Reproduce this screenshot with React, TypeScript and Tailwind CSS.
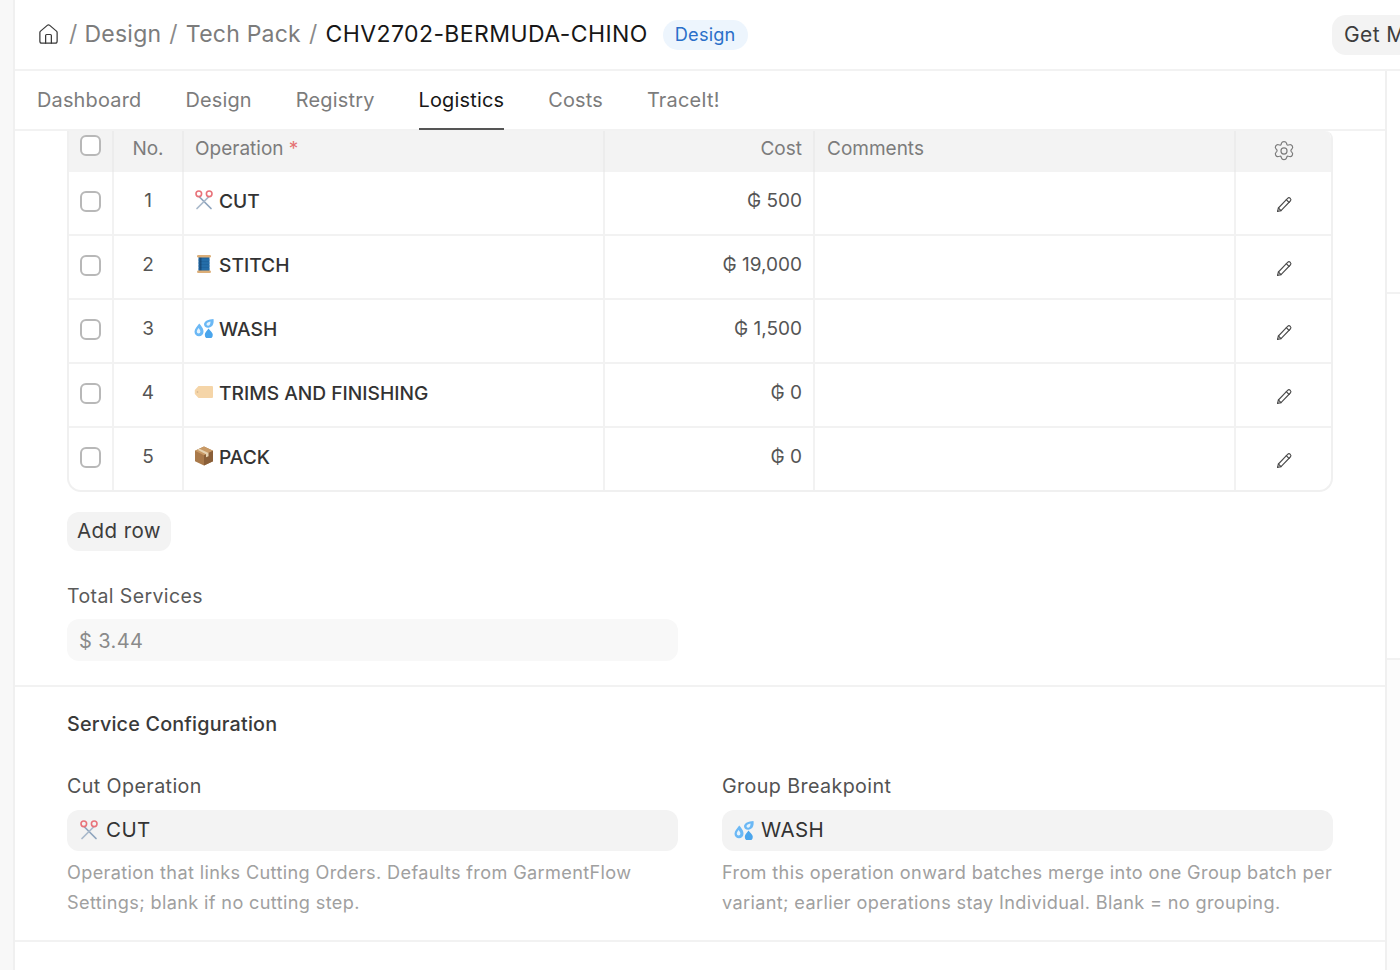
import React from "react";
import { House } from "lucide-react";

const Scissors = ({ s = 20 }: { s?: number }) => (
  <svg width={s} height={s} viewBox="0 0 20 20" fill="none" className="shrink-0">
    <path d="M5.500 7 17 18.500" stroke="#8ea4bd" strokeWidth="1.7" strokeLinecap="round" />
    <path d="M14.500 7 3 18.500" stroke="#a9b9cb" strokeWidth="1.7" strokeLinecap="round" />
    <circle cx="4.800" cy="3.800" r="2.800" stroke="#e8737a" strokeWidth="1.6" />
    <circle cx="15.200" cy="3.800" r="2.800" stroke="#e8737a" strokeWidth="1.6" />
  </svg>
);
const Spool = () => (
  <svg width="20" height="20" viewBox="0 0 20 20" className="shrink-0">
    <rect x="4.500" y="3" width="11" height="14" fill="#1f659f" />
    <path d="M4.500 6h11M4.500 9h11M4.500 12h11M4.500 15h11" stroke="#2b76b3" strokeWidth="1" />
    <rect x="5.500" y="3" width="2" height="14" fill="#123a63" opacity=".6" />
    <rect x="3" y="1" width="14" height="2.600" rx="1.300" fill="#dcae78" />
    <rect x="3" y="16.400" width="14" height="2.600" rx="1.300" fill="#dcae78" />
  </svg>
);
const Drops = ({ s = 20 }: { s?: number }) => (
  <svg width={s} height={s} viewBox="0 0 20 20" className="shrink-0">
    <path d="M5.200 5.500c-2.200 3-4.700 5.300-4.700 8.300a4.500 4.500 0 0 0 9 0c0-1.500-.3-2.900-1.300-4.400C7.300 8 6.200 6.700 5.200 5.500Z" fill="#6bb8f5" />
    <path d="M4.600 10c-1.100 1.400-1.800 2.500-1.800 3.700a1.800 1.800 0 0 0 3.600 0c0-1.300-.9-2.400-1.800-3.700Z" fill="#e4f3fd" />
    <path d="M19.500 1c.5 3.800-.2 8-5 8.700-2.700.3-4.500-1.300-4.500-3.400C10 3 14.500 1.400 19.500 1Z" fill="#6bb8f5" />
    <path d="M16.500 3.500c-2.200.4-4 1.200-4 2.800 0 .9.800 1.500 1.800 1.400 1.700-.2 2.200-2.200 2.200-4.200Z" fill="#e4f3fd" />
    <path d="M14.500 10.500c1.800 2.300 4.300 4.200 4.300 6.200a4 4 0 0 1-8 0c0-2 2-3.900 3.700-6.200Z" fill="#4aa5ec" />
  </svg>
);
const Tag = () => (
  <svg width="20" height="20" viewBox="0 0 20 20" className="shrink-0">
    <path d="M4.500 4H18a1 1 0 0 1 1 1v10a1 1 0 0 1-1 1H4.500L.8 12V8Z" fill="#f5d5a8" />
    <circle cx="3.500" cy="10" r=".8" fill="#c9b08c" />
  </svg>
);
const Box = () => (
  <svg width="20" height="20" viewBox="0 0 20 20" className="shrink-0">
    <path d="M10 .5 19 4.800v10.400L10 19.500 1 15.200V4.800Z" fill="#a9794a" />
    <path d="M10 .5 19 4.800 10 9.200 1 4.800Z" fill="#c99a66" />
    <path d="M10 9.200v10.300l9-4.300V4.800Z" fill="#8a5f38" />
    <path d="M5.500 2.700 14.500 7v3.200l-2.500 1V8.200L3.500 3.700Z" fill="#e6d2b0" />
  </svg>
);

const Pencil = () => (
  <svg width="20" height="20" viewBox="0 0 20 20" fill="none" stroke="#4b4b4b" strokeWidth="1.1" strokeLinejoin="round" strokeLinecap="round">
    <path d="M13.600 3.300a1.900 1.900 0 0 1 2.700 2.700L7 15.600l-3.500.9.900-3.500Z" />
    <path d="M12.300 4.700l2.800 2.800" />
    <path d="M4.400 13l2.600 2.600" />
  </svg>
);
const Gear = () => (
  <svg width="26" height="26" viewBox="0 0 24 24" fill="none" stroke="#7c7c7c" strokeWidth="1.1" strokeLinejoin="round">
    <path d="M9.700 3.800c.3-1 1.100-1.500 2.300-1.500s2 .5 2.300 1.500l.3 1c.2.600.9.900 1.500.7l1-.3c1-.3 1.900.1 2.500 1.100s.5 2-.2 2.700l-.7.800c-.4.500-.4 1.200 0 1.700l.7.800c.7.700.8 1.700.2 2.700s-1.500 1.400-2.500 1.100l-1-.3c-.6-.2-1.300.1-1.500.7l-.3 1c-.3 1-1.100 1.500-2.300 1.500s-2-.5-2.300-1.500l-.3-1c-.2-.6-.9-.9-1.500-.7l-1 .3c-1 .3-1.900-.1-2.500-1.100s-.5-2 .2-2.700l.7-.8c.4-.5.4-1.200 0-1.700l-.7-.8c-.7-.7-.8-1.700-.2-2.700s1.500-1.400 2.500-1.100l1 .3c.6.200 1.300-.1 1.500-.7Z" transform="translate(0 1)" />
    <circle cx="12" cy="12" r="2.800" />
  </svg>
);

const Check = () => (
  <span className="block w-[21px] h-[21px] rounded-[6px] border-2 border-[#b8b8b8] bg-white" />
);

const rows = [
  { n: 1, icon: <Scissors />, name: "CUT", cost: "₲ 500" },
  { n: 2, icon: <Spool />, name: "STITCH", cost: "₲ 19,000" },
  { n: 3, icon: <Drops />, name: "WASH", cost: "₲ 1,500" },
  { n: 4, icon: <Tag />, name: "TRIMS AND FINISHING", cost: "₲ 0" },
  { n: 5, icon: <Box />, name: "PACK", cost: "₲ 0" },
];
const tabs = ["Dashboard", "Design", "Registry", "Logistics", "Costs", "TraceIt!"];

export default function App() {
  return (
    <div className="relative w-[1400px] h-[970px] overflow-hidden flex bg-white text-[#383838] font-['Inter',sans-serif]">
      <div className="w-[15px] shrink-0 bg-[#f8f8f8] border-r-2 border-[#f0f0f0]" />
      <div className="flex-1 min-w-0 flex flex-col">
        <header className="h-[71px] shrink-0 border-b-2 border-[#f2f2f2] flex items-center pl-[22px] text-[23px] tracking-[0.01em] whitespace-nowrap">
          <House size={23} strokeWidth={1.3} className="text-[#3a3a3a] mr-[9px]" />
          <span className="text-[#8a8a8a] mr-[7px]">/</span>
          <span className="text-[#7c7c7c] mr-[8px]">Design</span>
          <span className="text-[#8a8a8a] mr-[8px]">/</span>
          <span className="text-[#7c7c7c] mr-[8px]">Tech Pack</span>
          <span className="text-[#8a8a8a] mr-[8px]">/</span>
          <span className="text-[#171717] tracking-[0.018em]">CHV2702-BERMUDA-CHINO</span>
          <span className="ml-[15px] h-[30px] px-[12px] pt-[1px] flex items-center rounded-full bg-[#edf5fd] text-[#2a6fc9] text-[18.2px] tracking-[0.01em]">Design</span>
          <span className="ml-auto h-[40px] w-[100px] pl-[12px] rounded-l-[14px] bg-[#f3f3f3] flex items-center text-[21px] tracking-[0.02em] text-[#3d3d3d] overflow-hidden translate-x-[32px]">Get M</span>
        </header>
        <div className="flex-1 flex min-h-0">
          <main className="w-[1372px] shrink-0 border-r-2 border-[#f0f0f0] flex flex-col">
            <nav className="h-[60px] shrink-0 border-b-2 border-[#f2f2f2] flex gap-[44px] pl-[22px] text-[19.9px] tracking-[0.01em] text-[#7c7c7c]">
              {tabs.map((t) => (
                <span
                  key={t}
                  className={t === "Logistics" ? "h-[59px] pt-[15px] border-b-2 border-[#555555] text-[#171717]" : "h-[59px] pt-[15px]"}
                >
                  {t}
                </span>
              ))}
            </nav>
            <section className="pl-[52px] w-[1318px]">
              <div className="border-x-2 border-b-2 border-[#f0f0f0] rounded-b-[14px] rounded-tr-[8px] overflow-hidden text-[19px]">
                <div className="flex h-[41px] bg-[#f3f3f3] text-[#7c7c7c]">
                  <div className="w-[45px] shrink-0 border-r-2 border-[#ececec] pl-[11px] pt-[4px]"><Check /></div>
                  <div className="w-[70px] shrink-0 border-r-2 border-[#ececec] text-center pt-[4px]">No.</div>
                  <div className="w-[421px] shrink-0 border-r-2 border-[#ececec] pl-[11px] pt-[4px]">Operation <span className="text-[#e57373]">*</span></div>
                  <div className="w-[210px] shrink-0 border-r-2 border-[#ececec] pr-[11px] pt-[4px] text-right">Cost</div>
                  <div className="w-[421px] shrink-0 border-r-2 border-[#ececec] pl-[12px] pt-[4px]">Comments</div>
                  <div className="flex-1 flex justify-center pt-[7px]"><Gear /></div>
                </div>
                {rows.map((r, i) => (
                  <div key={r.n} className={i < rows.length - 1 ? "flex h-[64px] border-b-2 border-[#f2f2f2]" : "flex h-[62px]"}>
                    <div className="w-[45px] shrink-0 border-r-2 border-[#f2f2f2] pl-[11px] pt-[19px]"><Check /></div>
                    <div className="w-[70px] shrink-0 border-r-2 border-[#f2f2f2] text-center pt-[15px] text-[#555555]">{r.n}</div>
                    <div className="w-[421px] shrink-0 border-r-2 border-[#f2f2f2] pl-[11px] pt-[15px] flex items-start gap-[5px] font-medium text-[19.2px] leading-[28px] text-[#333333]">
                      <span className="mt-[3px] -ml-[1px]">{r.icon}</span>
                      {r.name}
                    </div>
                    <div className="w-[210px] shrink-0 border-r-2 border-[#f2f2f2] pr-[11px] pt-[15px] text-right text-[#555555]">{r.cost}</div>
                    <div className="w-[421px] shrink-0 border-r-2 border-[#f2f2f2]" />
                    <div className="flex-1 flex justify-center pt-[23px]"><Pencil /></div>
                  </div>
                ))}
              </div>
              <button className="block mt-[20px] h-[39px] w-[104px] rounded-[12px] bg-[#f3f3f3] text-[20.5px] tracking-[0.02em] text-[#3d3d3d]">Add row</button>
              <div className="mt-[32px] text-[19.5px] tracking-[0.02em] leading-[26px] text-[#5a5a5a]">Total Services</div>
              <div className="mt-[10px] h-[42px] w-[611px] rounded-[12px] bg-[#f8f8f8] pl-[12px] pt-[2px] flex items-center text-[20px] tracking-[0.02em] text-[#8a8a8a]">$ 3.44</div>
            </section>
            <section className="mt-[24px] border-y-2 border-[#f2f2f2] h-[257px] pl-[52px] pt-[24px]">
              <h2 className="text-[19.75px] font-medium leading-[26px] tracking-[0.01em] text-[#3a3a3a]">Service Configuration</h2>
              <div className="mt-[36px] flex gap-[44px]">
                <div className="w-[611px]">
                  <div className="text-[19.7px] tracking-[0.02em] leading-[26px] text-[#525252]">Cut Operation</div>
                  <div className="mt-[11px] h-[41px] rounded-[12px] bg-[#f3f3f3] pl-[12px] pb-[1px] flex items-center gap-[7px] text-[20.5px] tracking-[0.02em] text-[#333333]"><Scissors />CUT</div>
                  <p className="mt-[6px] text-[18.13px] tracking-[0.02em] leading-[30px] text-[#a0a0a0]">Operation that links Cutting Orders. Defaults from GarmentFlow Settings; blank if no cutting step.</p>
                </div>
                <div className="w-[611px]">
                  <div className="text-[19.7px] tracking-[0.02em] leading-[26px] text-[#525252]">Group Breakpoint</div>
                  <div className="mt-[11px] h-[41px] rounded-[12px] bg-[#f3f3f3] pl-[12px] pb-[1px] flex items-center gap-[7px] text-[20.5px] tracking-[0.02em] text-[#333333]"><Drops />WASH</div>
                  <p className="mt-[6px] text-[18.13px] tracking-[0.02em] leading-[30px] text-[#a0a0a0]">From this operation onward batches merge into one Group batch per variant; earlier operations stay Individual. Blank = no grouping.</p>
                </div>
              </div>
            </section>
          </main>
          <aside className="flex-1 flex flex-col">
            <div className="h-[223px] border-b-2 border-[#f2f2f2]" />
            <div className="h-[366px] border-b-2 border-[#f2f2f2]" />
            <div className="flex-1 bg-[#fcfcfc]" />
          </aside>
        </div>
      </div>
    </div>
  );
}
